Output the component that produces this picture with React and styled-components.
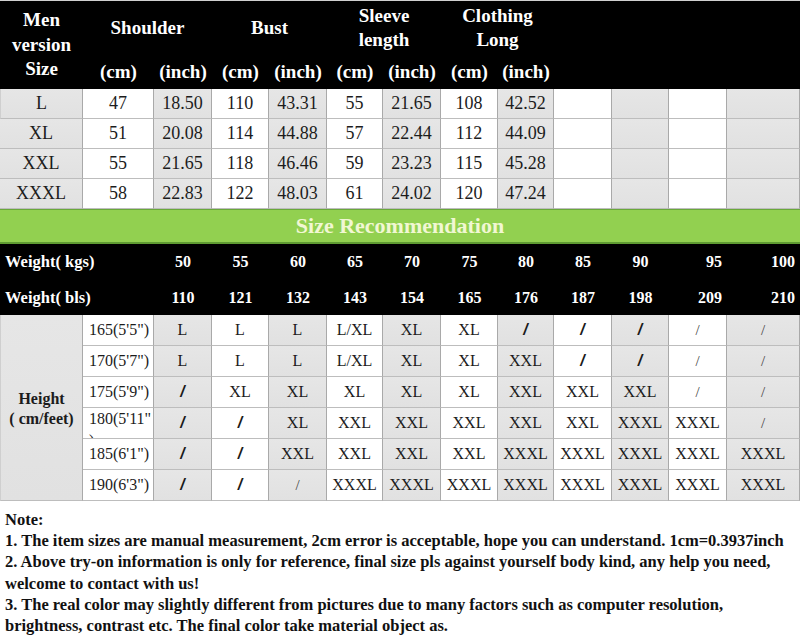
import React from 'react';
import styled, { createGlobalStyle } from 'styled-components';

const GlobalStyle = createGlobalStyle`
  html, body {
    margin: 0;
    padding: 0;
    background: #ffffff;
  }
  body {
    font-family: "Liberation Serif", "Times New Roman", serif;
    color: #1a1a1a;
  }
`;

const COLUMNS = '83px 71px 58px 57px 58px 56px 58px 57px 56px 58px 57px 58px 73px';

const measures = [
  ['L', '47', '18.50', '110', '43.31', '55', '21.65', '108', '42.52'],
  ['XL', '51', '20.08', '114', '44.88', '57', '22.44', '112', '44.09'],
  ['XXL', '55', '21.65', '118', '46.46', '59', '23.23', '115', '45.28'],
  ['XXXL', '58', '22.83', '122', '48.03', '61', '24.02', '120', '47.24'],
];

const kgs = ['50', '55', '60', '65', '70', '75', '80', '85', '90', '95', '100'];
const bls = ['110', '121', '132', '143', '154', '165', '176', '187', '198', '209', '210'];

// "/" = heavy slash, "|" = thin slash
const heights = [
  ['165(5\'5")', ['L', 'L', 'L', 'L/XL', 'XL', 'XL', '/', '/', '/', '|', '|']],
  ['170(5\'7")', ['L', 'L', 'L', 'L/XL', 'XL', 'XL', 'XXL', '/', '/', '|', '|']],
  ['175(5\'9")', ['/', 'XL', 'XL', 'XL', 'XL', 'XL', 'XXL', 'XXL', 'XXL', '|', '|']],
  ['180(5\'11"', ['/', '/', 'XL', 'XXL', 'XXL', 'XXL', 'XXL', 'XXL', 'XXXL', 'XXXL', '|']],
  ['185(6\'1")', ['/', '/', 'XXL', 'XXL', 'XXL', 'XXL', 'XXXL', 'XXXL', 'XXXL', 'XXXL', 'XXXL']],
  ['190(6\'3")', ['/', '/', '|', 'XXXL', 'XXXL', 'XXXL', 'XXXL', 'XXXL', 'XXXL', 'XXXL', 'XXXL']],
];

const Sheet = styled.div`
  width: 800px;
  background: #fff;
`;

const HeaderGrid = styled.div`
  display: grid;
  grid-template-columns: ${COLUMNS};
  grid-template-rows: 54px 34px;
  background: #000;
  color: #fff;
  font-weight: bold;
  font-size: 19px;
  border-top: 1px solid #d0d0d0;
  box-sizing: border-box;
`;

const HeadCell = styled.div`
  display: flex;
  align-items: center;
  justify-content: center;
  text-align: center;
  line-height: ${(p) => (p.tall ? '24.5px' : '24px')};
  grid-column: span ${(p) => p.span || 1};
  grid-row: span ${(p) => p.rows || 1};
`;

const TableGrid = styled.div`
  display: grid;
  grid-template-columns: ${COLUMNS};
  grid-auto-rows: ${(p) => p.rowHeight}px;
`;

const Cell = styled.div`
  display: flex;
  align-items: center;
  justify-content: center;
  box-sizing: border-box;
  background: ${(p) => (p.shade ? 'linear-gradient(#e6e6e6, #e1e1e1)' : '#ffffff')};
  border-right: 1px solid #a9a9a9;
  border-bottom: 1px solid #bdbdbd;
  font-size: ${(p) => p.size || 16}px;
  color: #1c1c1c;
  white-space: nowrap;
  &:first-child {
    border-left: 1px solid #cfcfcf;
  }
`;

const HeightValue = styled(Cell)`
  justify-content: flex-start;
  align-items: ${(p) => (p.clipped ? 'flex-start' : 'center')};
  padding-left: 6px;
  line-height: ${(p) => (p.clipped ? '22px' : 'normal')};
  overflow: hidden;
  white-space: normal;
`;

const HeightLabel = styled(Cell)`
  grid-row: span 6;
  flex-direction: column;
  font-weight: bold;
  font-size: 16px;
  line-height: 20px;
  text-align: center;
  border-left: 1px solid #cfcfcf;
  padding-top: 2px;
`;

const Slash = styled.span`
  font-family: ${(p) => (p.thin ? '"Liberation Serif", serif' : '"Liberation Sans", Arial, sans-serif')};
  font-weight: ${(p) => (p.thin ? 'normal' : 'bold')};
  font-style: ${(p) => (p.thin ? 'normal' : 'italic')};
  font-size: ${(p) => (p.thin ? 15 : 16)}px;
  color: ${(p) => (p.thin ? '#444' : '#1a1a1a')};
`;

const Banner = styled.div`
  height: 35px;
  box-sizing: border-box;
  background: #92d050;
  border-top: 1px solid #6aa83a;
  border-bottom: 2px solid #5f9c32;
  display: flex;
  align-items: center;
  justify-content: center;
  color: #f1f7d3;
  font-weight: bold;
  font-size: 22px;
`;

const WeightGrid = styled.div`
  display: grid;
  grid-template-columns: ${COLUMNS};
  grid-template-rows: 36px 35px;
  background: #000;
  color: #fff;
  font-weight: bold;
  font-size: 16px;
`;

const WeightLabel = styled.div`
  grid-column: span 2;
  display: flex;
  align-items: center;
  padding-left: 5px;
  font-size: 16.5px;
`;

const WeightValue = styled.div`
  display: flex;
  align-items: center;
  justify-content: ${(p) => (p.right ? 'flex-end' : 'center')};
  padding-right: ${(p) => (p.right ? 5 : 0)}px;
`;

const Notes = styled.div`
  padding: 8px 5px 6px;
  font-weight: bold;
  font-size: 16.5px;
  line-height: 21.2px;
  color: #111;
  white-space: nowrap;
`;

const NoteLine = styled.div``;

function SizeCell({ value, shade }) {
  if (value === '/') {
    return <Cell shade={shade}><Slash>/</Slash></Cell>;
  }
  if (value === '|') {
    return <Cell shade={shade}><Slash thin>/</Slash></Cell>;
  }
  return <Cell shade={shade}>{value}</Cell>;
}

function App() {
  return (
    <Sheet>
      <GlobalStyle />
      <HeaderGrid>
        <HeadCell rows={2} tall>Men<br />version<br />Size</HeadCell>
        <HeadCell span={2}>Shoulder</HeadCell>
        <HeadCell span={2}>Bust</HeadCell>
        <HeadCell span={2}>Sleeve<br />length</HeadCell>
        <HeadCell span={2}>Clothing<br />Long</HeadCell>
        <HeadCell span={4} rows={2} />
        {['(cm)', '(inch)', '(cm)', '(inch)', '(cm)', '(inch)', '(cm)', '(inch)'].map((u, i) => (
          <HeadCell key={i}>{u}</HeadCell>
        ))}
      </HeaderGrid>

      <TableGrid rowHeight={30}>
        {measures.map((row) =>
          [...row, '', '', '', ''].map((v, i) => (
            <Cell key={`${row[0]}-${i}`} shade={i % 2 === 0} size={18}>{v}</Cell>
          ))
        )}
      </TableGrid>

      <Banner>Size Recommendation</Banner>

      <WeightGrid>
        <WeightLabel>Weight( kgs)</WeightLabel>
        {kgs.map((v, i) => (
          <WeightValue key={v} right={i >= 9}>{v}</WeightValue>
        ))}
        <WeightLabel>Weight( bls)</WeightLabel>
        {bls.map((v, i) => (
          <WeightValue key={v} right={i >= 9}>{v}</WeightValue>
        ))}
      </WeightGrid>

      <TableGrid rowHeight={31}>
        <HeightLabel shade>
          <span>Height</span>
          <span>( cm/feet)</span>
        </HeightLabel>
        {heights.map(([h, sizes]) => (
          <React.Fragment key={h}>
            {h.endsWith(')') ? (
              <HeightValue>{h}</HeightValue>
            ) : (
              <HeightValue clipped>{h}<br />)</HeightValue>
            )}
            {sizes.map((s, i) => (
              <SizeCell key={i} value={s} shade={i % 2 === 0} />
            ))}
          </React.Fragment>
        ))}
      </TableGrid>

      <Notes>
        <NoteLine>Note:</NoteLine>
        <NoteLine>1. The item sizes are manual measurement, 2cm error is acceptable, hope you can understand. 1cm=0.3937inch</NoteLine>
        <NoteLine>2. Above try-on information is only for reference, final size pls against yourself body kind, any help you need,</NoteLine>
        <NoteLine>welcome to contact with us!</NoteLine>
        <NoteLine>3. The real color may slightly different from pictures due to many factors such as computer resolution,</NoteLine>
        <NoteLine>brightness, contrast etc. The final color take material object as.</NoteLine>
      </Notes>
    </Sheet>
  );
}

export default App;
